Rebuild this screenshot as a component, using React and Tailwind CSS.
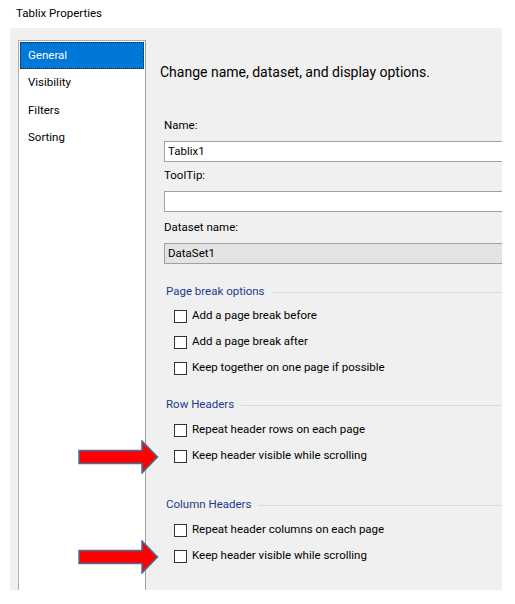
import React from "react";

const font = { fontFamily: 'Roboto, "Noto Sans", sans-serif' };

function Arrow({ top }) {
  return (
    <svg
      className="absolute left-[78px]"
      style={{ top }}
      width="82"
      height="34"
      viewBox="0 0 82 34"
    >
      <polygon
        points="1,10.5 64,10.5 64,1 79.5,17 64,33 64,23.5 1,23.5"
        fill="#ff0000"
        stroke="#41719c"
        strokeWidth="1.5"
        strokeLinejoin="miter"
      />
    </svg>
  );
}

function Checkbox({ label, className = "" }) {
  return (
    <div className={`h-[26px] flex items-center pl-[10px] ${className}`}>
      <div className="w-[13px] h-[13px] border border-[#333333] bg-white shrink-0" />
      <span className="ml-[5px] text-[11.5px] text-black leading-none">{label}</span>
    </div>
  );
}

function Section({ title, className = "" }) {
  return (
    <div className={`h-[16px] flex items-center pl-[2px] ${className}`}>
      <span className="text-[11.5px] text-[#1e3a8c] leading-none whitespace-nowrap">{title}</span>
      <div className="flex-1 h-px bg-[#d8d8d8] ml-[7px]" />
    </div>
  );
}

function Field({ label, value, gray, labelMt }) {
  return (
    <>
      <div className={`h-[16px] flex items-center text-[11.5px] text-black ${labelMt}`}>{label}</div>
      <div
        className={`mt-[7px] h-[21px] w-[360px] border border-[#a0a0a0] border-r-0 flex items-center pl-[3px] text-[11.5px] text-black ${
          gray ? "bg-[#e3e3e3]" : "bg-white"
        }`}
      >
        {value}
      </div>
    </>
  );
}

export default function App() {
  const navItems = ["General", "Visibility", "Filters", "Sorting"];
  return (
    <div className="relative w-[515px] h-[604px] bg-white overflow-hidden" style={font}>
      <div className="h-[28px] pl-[16px] flex items-center text-[11.5px] text-black">Tablix Properties</div>
      <div className="ml-[10px] w-[492px] h-[562px] bg-[#f0f0f0] flex pt-[12px] pl-[8px] overflow-hidden">
        <div className="w-[128px] shrink-0 bg-white border border-[#abadb3] border-b-0 border-r-[#a0a0a0] pt-px">
          {navItems.map((item, i) => (
            <div
              key={item}
              className={
                i === 0
                  ? "h-[27px] mx-px flex items-center pl-[8px] text-[11.5px] text-white bg-[#0078d7] outline-1 outline-dotted outline-[#1f1f1f] -outline-offset-1"
                  : "h-[27.5px] flex items-center pl-[9px] text-[11.5px] text-black"
              }
            >
              {item}
            </div>
          ))}
        </div>
        <div className="flex-1 flex flex-col pl-[18px] min-w-0">
          <div className="mt-[22px] -ml-[4px] h-[20px] flex items-center text-[14px] text-black whitespace-nowrap">
            Change name, dataset, and display options.
          </div>
          <Field label="Name:" value="Tablix1" labelMt="mt-[36px]" />
          <Field label="ToolTip:" value="" labelMt="mt-[6px]" />
          <Field label="Dataset name:" value="DataSet1" gray labelMt="mt-[8px]" />
          <Section title="Page break options" className="mt-[20px]" />
          <Checkbox label="Add a page break before" className="mt-[3px]" />
          <Checkbox label="Add a page break after" />
          <Checkbox label="Keep together on one page if possible" />
          <Section title="Row Headers" className="mt-[16px]" />
          <Checkbox label="Repeat header rows on each page" className="mt-[4px]" />
          <Checkbox label="Keep header visible while scrolling" />
          <Section title="Column Headers" className="mt-[28px]" />
          <Checkbox label="Repeat header columns on each page" className="mt-[4px]" />
          <Checkbox label="Keep header visible while scrolling" />
        </div>
      </div>
      <Arrow top={440} />
      <Arrow top={540} />
    </div>
  );
}
